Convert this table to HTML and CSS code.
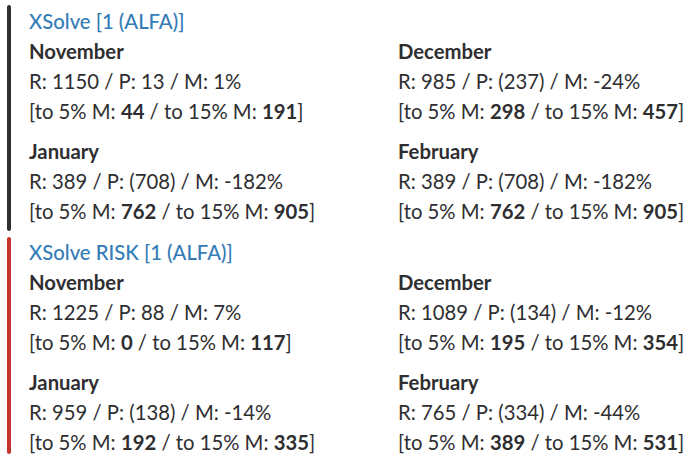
FILE: index.html
```html
<!DOCTYPE html>
<html>
<head>
<meta charset="utf-8">
<link rel="stylesheet" href="styles.css">
</head>
<body>
<div class="attachment attachment--dark">
  <div class="bar"></div>
  <div class="content">
    <div class="title">XSolve [1 (ALFA)]</div>
    <div class="grid">
      <div class="field">
        <div class="month">November</div>
        <div class="line">R: 1150 / P: 13 / M: 1%</div>
        <div class="line">[to 5% M: <b>44</b> / to 15% M: <b>191</b>]</div>
      </div>
      <div class="field">
        <div class="month">December</div>
        <div class="line">R: 985 / P: (237) / M: -24%</div>
        <div class="line">[to 5% M: <b>298</b> / to 15% M: <b>457</b>]</div>
      </div>
      <div class="field">
        <div class="month">January</div>
        <div class="line">R: 389 / P: (708) / M: -182%</div>
        <div class="line">[to 5% M: <b>762</b> / to 15% M: <b>905</b>]</div>
      </div>
      <div class="field">
        <div class="month">February</div>
        <div class="line">R: 389 / P: (708) / M: -182%</div>
        <div class="line">[to 5% M: <b>762</b> / to 15% M: <b>905</b>]</div>
      </div>
    </div>
  </div>
</div>
<div class="attachment attachment--red">
  <div class="bar"></div>
  <div class="content">
    <div class="title">XSolve RISK [1 (ALFA)]</div>
    <div class="grid">
      <div class="field">
        <div class="month">November</div>
        <div class="line">R: 1225 / P: 88 / M: 7%</div>
        <div class="line">[to 5% M: <b>0</b> / to 15% M: <b>117</b>]</div>
      </div>
      <div class="field">
        <div class="month">December</div>
        <div class="line">R: 1089 / P: (134) / M: -12%</div>
        <div class="line">[to 5% M: <b>195</b> / to 15% M: <b>354</b>]</div>
      </div>
      <div class="field">
        <div class="month">January</div>
        <div class="line">R: 959 / P: (138) / M: -14%</div>
        <div class="line">[to 5% M: <b>192</b> / to 15% M: <b>335</b>]</div>
      </div>
      <div class="field">
        <div class="month">February</div>
        <div class="line">R: 765 / P: (334) / M: -44%</div>
        <div class="line">[to 5% M: <b>389</b> / to 15% M: <b>531</b>]</div>
      </div>
    </div>
  </div>
</div>
</body>
</html>
```

FILE: styles.css
```css
html, body {
  margin: 0;
  padding: 0;
  background: #ffffff;
}
body {
  font-family: Lato, "Open Sans", sans-serif;
  font-size: 20.3px;
  color: #2e2e31;
  padding: 5px 0 0 7px;
}
.attachment {
  display: flex;
  gap: 18px;
}
.attachment--red {
  margin-top: 6px;
}
.bar {
  width: 4px;
  flex: none;
  border-radius: 2px;
}
.attachment--dark .bar {
  background: #2f3033;
}
.attachment--red .bar {
  background: #c4332e;
}
.content {
  flex: 1;
  padding-top: 1px;
  padding-bottom: 5px;
}
.attachment--red .content {
  padding-top: 0;
  padding-bottom: 0;
  margin-bottom: -3px;
}
.title {
  color: #347cb6;
  font-weight: 500;
  line-height: 30px;
}
.grid {
  display: grid;
  grid-template-columns: 369px 1fr;
  row-gap: 10px;
}
.month {
  font-weight: 700;
  line-height: 30px;
}
.line {
  line-height: 30px;
}
.line b {
  font-weight: 700;
}
```
